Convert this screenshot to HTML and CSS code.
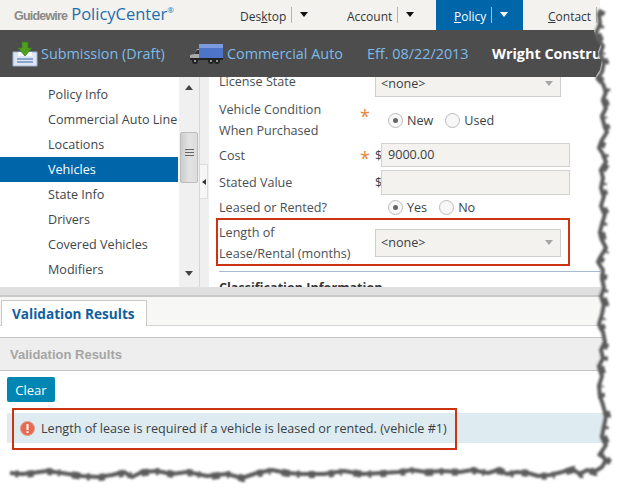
FILE: index.html
```html
<!DOCTYPE html>
<html lang="en">
<head>
<meta charset="utf-8">
<title>PolicyCenter</title>
<link rel="stylesheet" href="styles.css">
</head>
<body>
<div class="app">
  <header class="topbar">
    <div class="logo"><span class="gw">Guidewire</span><span class="pc">PolicyCenter</span><sup class="reg">®</sup></div>
    <nav class="nav">
      <div class="nav-item desktop"><span class="nav-label">Des<u>k</u>top</span><i class="nav-sep"></i><i class="caret"></i></div>
      <div class="nav-item account"><span class="nav-label">Account</span><i class="nav-sep"></i><i class="caret"></i></div>
      <div class="nav-item policy"><span class="nav-label"><u>P</u>olicy</span><i class="nav-sep"></i><i class="caret"></i></div>
      <div class="nav-item contact"><span class="nav-label"><u>C</u>ontact</span><i class="nav-sep"></i></div>
    </nav>
  </header>

  <div class="infobar">
    <svg class="ico-sub" width="26" height="26" viewBox="0 0 26 26">
      <path d="M1 11h24v14H1z" fill="#dfe6f3" stroke="#9db2d4"/>
      <path d="M6 11h14v4H6z" fill="#f7f8fb"/>
      <path d="M5 18h16M5 21h16" stroke="#6f8fc4" stroke-width="1.5"/>
      <path d="M10 1h6v6h4l-7 8-7-8h4z" fill="#4f9e1f" stroke="#3a7d12" stroke-width=".7"/>
    </svg>
    <span class="info-link sub">Submission (Draft)</span>
    <svg class="ico-truck" width="34" height="22" viewBox="0 0 34 22">
      <rect x="10" y="1" width="24" height="14" fill="#4d74c9"/>
      <rect x="10" y="1" width="24" height="4" fill="#7b9ae0"/>
      <path d="M1 16v-4l4-1 3-5h2v10z" fill="#a9a9a9"/>
      <path d="M5 11l3-4h2v4z" fill="#32363c"/>
      <rect x="1" y="15" width="33" height="2" fill="#222"/>
      <circle cx="6" cy="18" r="3" fill="#222"/><circle cx="6" cy="18" r="1" fill="#bbb"/>
      <circle cx="22" cy="18" r="3" fill="#222"/><circle cx="22" cy="18" r="1" fill="#bbb"/>
      <circle cx="28" cy="18" r="3" fill="#222"/><circle cx="28" cy="18" r="1" fill="#bbb"/>
    </svg>
    <span class="info-link auto">Commercial Auto</span>
    <span class="info-link eff">Eff. 08/22/2013</span>
    <span class="info-name">Wright Construction</span>
  </div>

  <main class="workspace">
    <aside class="sidebar">
      <ul class="menu">
        <li>Policy Info</li>
        <li>Commercial Auto Line</li>
        <li>Locations</li>
        <li class="selected">Vehicles</li>
        <li>State Info</li>
        <li>Drivers</li>
        <li>Covered Vehicles</li>
        <li>Modifiers</li>
      </ul>
    </aside>
    <div class="scrollbar">
      <i class="arrow-up"></i>
      <div class="thumb"><i></i><i></i><i></i></div>
      <i class="arrow-down"></i>
    </div>
    <div class="splitter"><div class="handle"><i></i></div></div>
    <section class="form">
      <div class="row r-license"><span class="label">License State</span><span class="mark"></span><div class="select">&lt;none&gt;<i></i></div></div>
      <div class="row r-cond">
        <span class="label">Vehicle Condition<br>When Purchased</span><span class="mark star star-top">*</span>
        <div class="radios"><i class="radio on"></i><span class="r-text">New</span><i class="radio"></i><span>Used</span></div>
      </div>
      <div class="row r-cost"><span class="label">Cost</span><span class="mark star">*</span><span class="dollar">$</span><div class="input">9000.00</div></div>
      <div class="row r-stated"><span class="label">Stated Value</span><span class="mark"></span><span class="dollar">$</span><div class="input"></div></div>
      <div class="row r-leased">
        <span class="label">Leased or Rented?</span><span class="mark"></span>
        <div class="radios"><i class="radio on"></i><span class="r-text">Yes</span><i class="radio"></i><span>No</span></div>
      </div>
      <div class="row r-length"><span class="label">Length of<br>Lease/Rental (months)</span><span class="mark"></span><div class="select">&lt;none&gt;<i></i></div></div>
      <h3 class="section">Classification Information</h3>
    </section>
  </main>

  <div class="hsplit"></div>

  <div class="tabs"><div class="tab">Validation Results</div></div>

  <div class="panel-title">Validation Results</div>
  <button class="clear" type="button">Clear</button>
  <div class="message">
    <svg class="ico-err" width="15" height="15" viewBox="0 0 15 15">
      <circle cx="7.5" cy="7.5" r="7" fill="#e8694f" stroke="#d9a08f"/>
      <rect x="6.5" y="3" width="2" height="6" fill="#fff"/>
      <rect x="6.5" y="10" width="2" height="2" fill="#fff"/>
    </svg>
    <span>Length of lease is required if a vehicle is leased or rented. (vehicle #1)</span>
  </div>

  <div class="callout c-form"></div>
  <div class="callout c-msg"></div>

  <svg class="torn" width="624" height="494" viewBox="0 0 624 494">
    <defs>
      <filter id="soft" x="-5%" y="-5%" width="110%" height="110%"><feGaussianBlur stdDeviation="1"/></filter>
      <path id="edge" d="M599 8L597 12L598 22L594 31L597 38L601 44L598 52L602 60L600 70L596 76L601 82L604 90L601 98L604 106L600 114L602 122L605 130L600 138L597 146L601 152L604 160L599 168L601 176L599 186L602 194L599 204L603 212L600 222L598 230L600 238L604 246L599 254L596 260L601 268L600 276L602 286L599 294L602 302L600 312L597 322L601 330L603 340L599 348L601 356L597 364L600 374L597 384L598 394L601 403L604 414L602 424L600 434L604 443L598 452L604 458L600 465L592 470L585 468L578 472L570 467L560 470L548 473L536 474L526 471L515 470L505 472L496 468L486 471L470 468L458 470L440 469L424 470L410 468L396 470L380 471L360 472L342 469L322 472L300 472L285 471L270 468L255 471L240 476L225 472L205 474L185 470L170 472L155 469L140 470L130 475L122 470L110 473L96 475L80 474L60 471L45 469L30 471L20 472L8 471"/>
    </defs>
    <path fill="#fff" d="M600 0L600 8L597 12L598 22L594 31L597 38L601 44L598 52L602 60L600 70L596 76L601 82L604 90L601 98L604 106L600 114L602 122L605 130L600 138L597 146L601 152L604 160L599 168L601 176L599 186L602 194L599 204L603 212L600 222L598 230L600 238L604 246L599 254L596 260L601 268L600 276L602 286L599 294L602 302L600 312L597 322L601 330L603 340L599 348L601 356L597 364L600 374L597 384L598 394L601 403L604 414L602 424L600 434L604 443L598 452L604 458L600 465L592 470L585 468L578 472L570 467L560 470L548 473L536 474L526 471L515 470L505 472L496 468L486 471L470 468L458 470L440 469L424 470L410 468L396 470L380 471L360 472L342 469L322 472L300 472L285 471L270 468L255 471L240 476L225 472L205 474L185 470L170 472L155 469L140 470L130 475L122 470L110 473L96 475L80 474L60 471L45 469L30 471L20 472L8 471L0 471L0 494L624 494L624 0Z"/>
    <g filter="url(#soft)">
      <use href="#edge" class="shadow"/>
      <use href="#edge" class="shadow-lumps"/>
    </g>
  </svg>
</div>
</body>
</html>
```

FILE: styles.css
```css
* { box-sizing: border-box; }
html, body { margin: 0; padding: 0; background: #fff; }
body { font-family: "Open Sans", sans-serif; font-size: 12.6px; color: #3a3f45; }
.app { position: relative; width: 624px; height: 494px; overflow: hidden; }

/* top bar */
.topbar { display: flex; height: 30px; background: #f3f2ee; }
.logo { width: 240px; flex: none; padding-left: 14px; display: flex; align-items: baseline; line-height: 28px; white-space: nowrap; }
.gw { font-family: "Liberation Sans", sans-serif; font-weight: bold; font-size: 12.5px; letter-spacing: -.8px; color: #8a8a8a; margin-right: 4px; }
.pc { font-size: 16.5px; color: #1d6db0; }
.reg { font-size: 8px; line-height: 1; color: #1d6db0; align-self: flex-start; margin-top: 6px; }
.nav { display: flex; flex: 1; }
.nav-item { display: flex; align-items: center; flex: none; color: #33373b; font-size: 12px; height: 30px; padding-top: 2px; }
.nav-label { white-space: nowrap; }
.nav-sep { width: 1px; height: 16px; background: #b4b4b4; margin-left: 5px; margin-top: -2px; }
.caret { width: 0; height: 0; border-style: solid; border-width: 5px 4px 0; border-color: #111 transparent transparent; margin-left: 8px; margin-top: -3px; }
.desktop { width: 107px; }
.account { width: 89px; }
.policy { width: 87px; background: #0066aa; color: #fff; padding-left: 18px; }
.policy .nav-sep { background: #9cc3de; }
.policy .caret { border-top-color: #fff; }
.contact { padding-left: 25px; }

/* info bar */
.infobar { display: flex; align-items: center; height: 47px; background: #4d4d4d; font-size: 14.4px; white-space: nowrap; overflow: hidden; padding-left: 12px; }
.info-link { color: #7cbbea; flex: none; }
.ico-sub { flex: none; margin-right: 3px; }
.sub { width: 148px; }
.ico-truck { flex: none; margin-right: 4px; }
.auto { width: 140px; }
.eff { width: 125px; }
.info-name { font-weight: bold; color: #fff; flex: none; }

/* workspace */
.workspace { display: flex; height: 210px; overflow: hidden; background: #fff; }
.sidebar { width: 178px; flex: none; padding-top: 5px; }
.menu { list-style: none; margin: 0; padding: 0; }
.menu li { height: 25px; line-height: 25px; padding-left: 48px; white-space: nowrap; color: #40464c; overflow: hidden; }
.menu .selected { background: #0066aa; color: #fff; }
.scrollbar { width: 21px; flex: none; margin-left: 1px; background: #f0f0f0; display: flex; flex-direction: column; align-items: center; border-right: 1px solid #d6d6d6; position: relative; }
.arrow-up { width: 0; height: 0; margin-top: 8px; border-style: solid; border-width: 0 4px 5px; border-color: transparent transparent #444; }
.arrow-down { width: 0; height: 0; margin-top: 88px; border-style: solid; border-width: 5px 4px 0; border-color: #444 transparent transparent; }
.thumb { width: 18px; height: 51px; margin-top: 42px; border: 1px solid #bdbdbd; border-radius: 2px; background: linear-gradient(90deg, #ccc, #e2e2e2 50%, #ddd); display: flex; flex-direction: column; justify-content: center; align-items: center; gap: 2px; padding-bottom: 10px; }
.thumb i { width: 9px; height: 1px; background: #666; }
.splitter { width: 9px; flex: none; background: #efefef; position: relative; }
.handle { position: absolute; left: 0; top: 87px; width: 8px; height: 35px; background: #f6f6f6; border: 1px solid #ddd; border-left: 0; display: flex; align-items: center; justify-content: center; }
.handle i { width: 0; height: 0; border-style: solid; border-width: 3px 4px 3px 0; border-color: transparent #333 transparent transparent; }

/* form */
.form { flex: 1; padding: 0 0 0 10px; margin-top: -12px; min-width: 0; }
.row { display: grid; grid-template-columns: 144px 12px 6px 189px; align-items: center; color: #4a4f54; }
.label { grid-column: 1; line-height: 21px; white-space: nowrap; }
.mark { grid-column: 2; }
.star { color: #e8833a; font-size: 18px; line-height: 12px; padding-top: 5px; margin-left: -3px; }
.star-top { align-self: start; margin-top: 6px; }
.dollar { grid-column: 3; color: #3a3f45; }
.input { grid-column: 4; background: #f3f2ee; border: 1px solid #d2d2ce; color: #3a3f45; padding-left: 6px; line-height: 22px; height: 100%; }
.r-license { height: 32px; }
.r-license .select { margin-top: 4px; }
.r-cond { height: 42px; margin-top: 2px; }
.r-cost { height: 24px; margin-top: 2px; }
.r-stated { height: 25px; margin-top: 3px; }
.r-leased { height: 24px; }
.r-length { height: 47px; }
.select { grid-column: 3 / 5; width: 186px; height: 28px; background: #f3f2ee; border: 1px solid #cfcfcb; padding-left: 5px; display: flex; align-items: center; justify-content: space-between; padding-right: 7px; color: #3a3f45; }
.select i { width: 0; height: 0; border-style: solid; border-width: 5px 4px 0; border-color: #a5a5a5 transparent transparent; }
.radios { grid-column: 3 / 5; display: flex; align-items: center; padding-left: 13px; color: #3a3f45; }
.radio { width: 15px; height: 15px; border-radius: 50%; border: 1px solid #bcbcbc; background: #f7f7f7; margin-right: 4px; position: relative; flex: none; }
.radio.on::after { content: ""; position: absolute; left: 4px; top: 4px; width: 5px; height: 5px; border-radius: 50%; background: #666; }
.r-text { margin-right: 12px; }
.section { margin: 5px 0 0; padding-top: 7px; border-top: 1px solid #a4bad0; font-size: 12.6px; line-height: 18px; color: #333; font-weight: bold; }

/* lower panel */
.hsplit { height: 10px; background: #e0e0e0; border-bottom: 2px solid #c9c9c9; }
.tabs { height: 29px; background: #f7f7f5; border-bottom: 1px solid #d4d4d4; padding: 3px 0 0 1px; }
.tab { width: 146px; height: 26px; background: #fff; border: 1px solid #c9c9c9; border-bottom: 0; padding-left: 10px; font-weight: bold; font-size: 13.6px; line-height: 25px; color: #0f5f9f; white-space: nowrap; }
.panel-title { height: 34px; margin-top: 11px; background: #eeeeee; border-top: 1px solid #c4c4c4; border-bottom: 1px solid #c4c4c4; padding-left: 10px; font-family: "Liberation Sans", sans-serif; font-weight: bold; font-size: 13px; line-height: 33px; color: #a5a5a5; }
.clear { display: block; width: 48px; height: 25px; margin: 6px 0 0 7px; padding: 0; border: 0; border-radius: 2px; background: #0086b3; color: #fff; font: 13px "Open Sans", sans-serif; }
.message { display: flex; align-items: center; height: 30px; margin: 11px 0 0 7px; background: #deebf0; padding-left: 13px; color: #3a3f45; white-space: nowrap; }
.ico-err { margin-right: 6px; flex: none; }

/* annotations over the screenshot */
.callout { position: absolute; border: 2px solid #cc3311; }
.c-form { left: 216px; top: 218px; width: 354px; height: 48px; }
.c-msg { left: 12px; top: 408px; width: 445px; height: 42px; }
.torn { position: absolute; left: 0; top: 0; pointer-events: none; }
.shadow { fill: none; stroke: #5c5c5c; stroke-width: 4; stroke-linejoin: round; transform: translate(2px, 2px); }
.shadow-lumps { fill: none; stroke: #5c5c5c; stroke-width: 7; stroke-dasharray: 6 9 3 7 8 12 2 6 5 14; transform: translate(3.5px, 2.5px); }
```
